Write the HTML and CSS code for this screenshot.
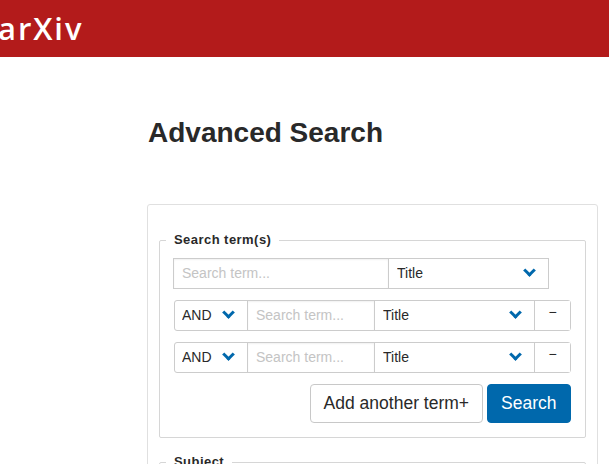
FILE: index.html
```html
<!DOCTYPE html>
<html lang="en">
<head>
  <meta charset="UTF-8">
  <title>Advanced Search</title>
  <link rel="stylesheet" href="styles.css">
</head>
<body>

<header class="site-header">
  <span class="logo">arXiv</span>
</header>

<main class="content">
  <h1>Advanced Search</h1>

  <form class="search-box">
    <fieldset class="group">
      <legend>Search term(s)</legend>

      <div class="term-row term-first">
        <input class="term-input" type="text" placeholder="Search term...">
        <div class="select-wrap field-wide">
          <select><option>Title</option></select>
        </div>
      </div>

      <div class="term-row">
        <div class="select-wrap field-op">
          <select><option>AND</option></select>
        </div>
        <input class="term-input" type="text" placeholder="Search term...">
        <div class="select-wrap field-narrow">
          <select><option>Title</option></select>
        </div>
        <button class="remove" type="button">&minus;</button>
      </div>

      <div class="term-row">
        <div class="select-wrap field-op">
          <select><option>AND</option></select>
        </div>
        <input class="term-input" type="text" placeholder="Search term...">
        <div class="select-wrap field-narrow">
          <select><option>Title</option></select>
        </div>
        <button class="remove" type="button">&minus;</button>
      </div>

      <div class="actions">
        <button class="btn" type="button">Add another term+</button>
        <button class="btn btn-primary" type="submit">Search</button>
      </div>
    </fieldset>

    <fieldset class="group">
      <legend>Subject</legend>
    </fieldset>
  </form>
</main>

</body>
</html>
```

FILE: styles.css
```css
html {
  overflow: hidden;
}
body {
  margin: 0;
  background-color: #ffffff;
  color: #292929;
  font-family: 'Liberation Sans', Arial, sans-serif;
}
.site-header {
  background-color: #b31b1b;
  height: 57px;
  display: flex;
  align-items: center;
  overflow: hidden;
}
.logo {
  margin-left: -2px;
  margin-top: -2px;
  color: #ffffff;
  font-family: 'Open Sans', sans-serif;
  font-size: 31px;
  font-weight: 600;
  letter-spacing: 1.9px;
}
.content {
  padding: 0 11px 0 147px;
}
h1 {
  margin: 59px 0 54px 1px;
  font-size: 28px;
  line-height: 34px;
  font-weight: 700;
  color: #292929;
}
.search-box {
  border: 1px solid #e0e0e0;
  border-radius: 3px;
  padding: 28px 11px 20px;
}
.group {
  margin: 0 0 17px;
  padding: 11px 14px 14px 13px;
  border: 1px solid #d6d6d6;
  border-radius: 2px;
  min-width: 0;
}
legend {
  margin-left: -7px;
  padding: 0 8px;
  font-size: 13px;
  font-weight: 700;
  line-height: 14px;
  letter-spacing: 0.45px;
}
.term-row {
  display: flex;
  height: 31px;
  margin: 0 0 11px 1px;
  border: 1px solid #cccccc;
  border-radius: 3px;
  box-sizing: border-box;
  width: 397px;
}
.term-first {
  width: 376px;
  margin-left: 0;
  border-radius: 0;
}
.term-input {
  flex: 1;
  min-width: 0;
  padding: 0 8px 2px;
  border: none;
  outline: none;
  font-family: inherit;
  font-size: 14px;
  box-shadow: inset 0 1px 2px rgba(0, 0, 0, 0.06);
}
.term-input::placeholder {
  color: #c4c4c4;
}
.select-wrap {
  position: relative;
  flex: none;
}
.select-wrap::after {
  content: "";
  position: absolute;
  right: 14px;
  top: 7px;
  width: 6px;
  height: 6px;
  border: solid #0068ac;
  border-width: 0 3px 3px 0;
  transform: rotate(45deg);
  pointer-events: none;
}
.select-wrap select {
  appearance: none;
  width: 100%;
  height: 100%;
  padding: 0 8px 2px;
  border: none;
  background: transparent;
  color: #292929;
  font-family: inherit;
  font-size: 14px;
}
.field-op {
  width: 72px;
  border-right: 1px solid #cccccc;
}
.field-op select {
  padding-left: 7px;
}
.field-wide {
  width: 159px;
  border-left: 1px solid #cccccc;
}
.field-narrow {
  width: 159px;
  border-left: 1px solid #cccccc;
}
.remove {
  flex: none;
  width: 36px;
  padding: 0 0 7px;
  border: none;
  border-left: 1px solid #cccccc;
  background: #ffffff;
  color: #292929;
  font-family: inherit;
  font-size: 14px;
}
.actions {
  display: flex;
  justify-content: flex-end;
  gap: 4px;
  width: 398px;
  margin-top: 11px;
}
.btn {
  height: 39px;
  padding: 0 12.5px;
  border: 1px solid #c8c8c8;
  border-radius: 4px;
  background: #ffffff;
  color: #292929;
  font-family: inherit;
  font-size: 17.5px;
}
.btn-primary {
  padding: 0 13.5px;
  border-color: #0068ac;
  background-color: #0068ac;
  color: #ffffff;
}
```
